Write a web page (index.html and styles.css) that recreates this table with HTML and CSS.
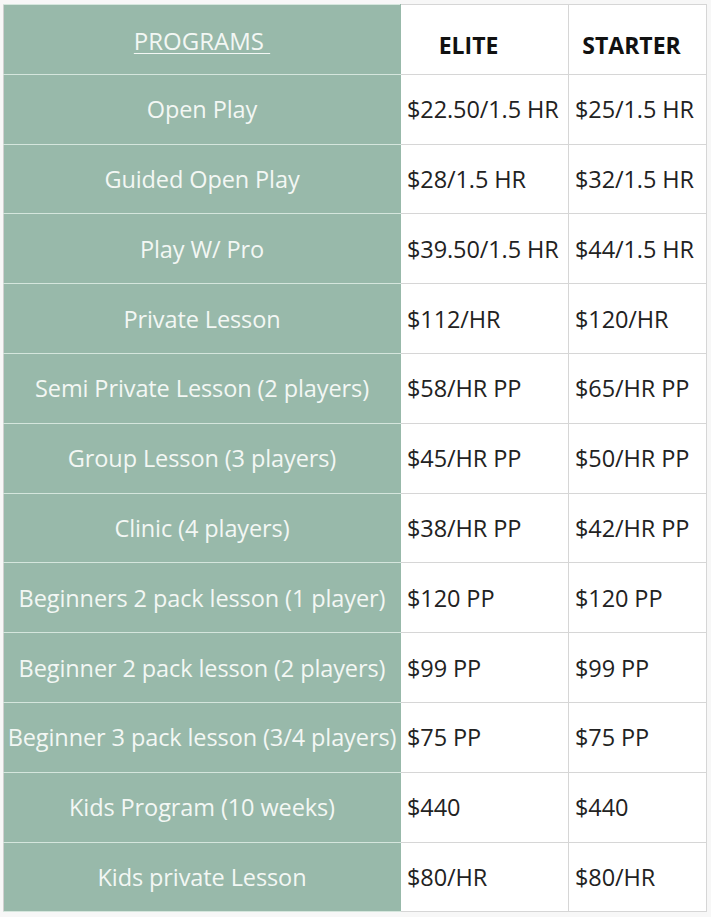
FILE: index.html
```html
<!DOCTYPE html>
<html>
<head>
<meta charset="utf-8">
<link rel="stylesheet" href="styles.css">
</head>
<body>
<div class="wrap">
<table class="prices">
  <colgroup>
    <col class="c1"><col class="c2"><col class="c3">
  </colgroup>
  <thead>
    <tr>
      <th class="prog"><span class="prog-title">PROGRAMS&nbsp;</span></th>
      <th class="tier tier-elite">ELITE</th>
      <th class="tier tier-starter">STARTER</th>
    </tr>
  </thead>
  <tbody>
    <tr><td class="name">Open Play</td><td>$22.50/1.5 HR</td><td>$25/1.5 HR</td></tr>
    <tr><td class="name">Guided Open Play</td><td>$28/1.5 HR</td><td>$32/1.5 HR</td></tr>
    <tr><td class="name">Play W/ Pro</td><td>$39.50/1.5 HR</td><td>$44/1.5 HR</td></tr>
    <tr><td class="name">Private Lesson</td><td>$112/HR</td><td>$120/HR</td></tr>
    <tr><td class="name">Semi Private Lesson (2 players)</td><td>$58/HR PP</td><td>$65/HR PP</td></tr>
    <tr><td class="name">Group Lesson (3 players)</td><td>$45/HR PP</td><td>$50/HR PP</td></tr>
    <tr><td class="name">Clinic (4 players)</td><td>$38/HR PP</td><td>$42/HR PP</td></tr>
    <tr><td class="name">Beginners 2 pack lesson (1 player)</td><td>$120 PP</td><td>$120 PP</td></tr>
    <tr><td class="name">Beginner 2 pack lesson (2 players)</td><td>$99 PP</td><td>$99 PP</td></tr>
    <tr><td class="name">Beginner 3 pack lesson (3/4 players)</td><td>$75 PP</td><td>$75 PP</td></tr>
    <tr><td class="name">Kids Program (10 weeks)</td><td>$440</td><td>$440</td></tr>
    <tr><td class="name">Kids private Lesson</td><td>$80/HR</td><td>$80/HR</td></tr>
  </tbody>
</table>
</div>
</body>
</html>
```
FILE: styles.css
```css
html, body {
  margin: 0;
  padding: 0;
  background: #f7f7f7;
}
.wrap {
  padding: 4px 0 0 3px;
}
.prices {
  border-collapse: collapse;
  table-layout: fixed;
  width: 703px;
  font-family: "Open Sans", "Noto Sans", sans-serif;
  background: #ffffff;
  border: 1px solid #d0d0d0;
}
.c1 { width: 397px; }
.c2 { width: 168px; }
.c3 { width: 138px; }
.prices th, .prices td {
  height: 69.8px;
  padding: 0;
  border: 1px solid #d6d6d6;
  box-sizing: border-box;
}
.prices td {
  font-size: 23.5px;
  color: #222222;
  padding-left: 6px;
  white-space: nowrap;
  letter-spacing: -0.1px;
}
.prices td.name, .prices th.prog {
  background: #98b9aa;
  color: #f3f7f4;
  text-align: center;
  padding-left: 0;
  border-color: #d5e6dd;
  border-left-color: #d0d0d0;
  border-right-color: #98b9aa;
}
.prog {
  font-weight: normal;
  font-size: 24px;
  vertical-align: top;
  padding-top: 19px !important;
}
.prog-title {
  text-decoration: underline;
  text-decoration-thickness: 1px;
  text-underline-offset: 3px;
}
.tier {
  font-size: 23px;
  font-weight: bold;
  color: #111111;
  padding-top: 12px !important;
}
.tier-elite {
  padding-right: 32px !important;
}
.tier-starter {
  padding-right: 12px !important;
}
```
